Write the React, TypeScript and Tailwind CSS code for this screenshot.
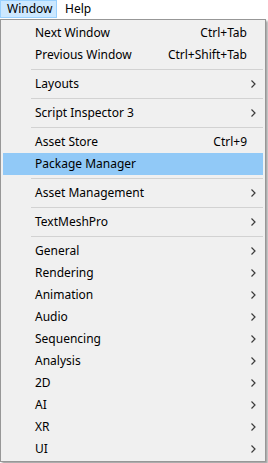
type Item =
  | { kind: "sep" }
  | { kind: "item"; label: string; shortcut?: string; sub?: boolean; active?: boolean };

const items: Item[] = [
  { kind: "item", label: "Next Window", shortcut: "Ctrl+Tab" },
  { kind: "item", label: "Previous Window", shortcut: "Ctrl+Shift+Tab" },
  { kind: "sep" },
  { kind: "item", label: "Layouts", sub: true },
  { kind: "sep" },
  { kind: "item", label: "Script Inspector 3", sub: true },
  { kind: "sep" },
  { kind: "item", label: "Asset Store", shortcut: "Ctrl+9" },
  { kind: "item", label: "Package Manager", active: true },
  { kind: "sep" },
  { kind: "item", label: "Asset Management", sub: true },
  { kind: "sep" },
  { kind: "item", label: "TextMeshPro", sub: true },
  { kind: "sep" },
  { kind: "item", label: "General", sub: true },
  { kind: "item", label: "Rendering", sub: true },
  { kind: "item", label: "Animation", sub: true },
  { kind: "item", label: "Audio", sub: true },
  { kind: "item", label: "Sequencing", sub: true },
  { kind: "item", label: "Analysis", sub: true },
  { kind: "item", label: "2D", sub: true },
  { kind: "item", label: "AI", sub: true },
  { kind: "item", label: "XR", sub: true },
  { kind: "item", label: "UI", sub: true },
];

function Chevron() {
  return (
    <svg width="5" height="8" viewBox="0 0 5 8" className="block">
      <path d="M0.5 0.5 L4 4 L0.5 7.5" fill="none" stroke="#3c3c3c" strokeWidth="1.2" />
    </svg>
  );
}

export default function App() {
  return (
    <div className="w-[268px] h-[463px] bg-white text-[12px] text-black font-['Noto_Sans',sans-serif] leading-none overflow-hidden">
      <div className="flex h-[19px] items-stretch">
        <div className="w-[57px] h-[18px] bg-[#cce8ff] border border-[#99d1ff] flex items-center pl-[6px]">
          Window
        </div>
        <div className="flex items-center pl-[8px] h-[18px]">Help</div>
      </div>
      <div className="w-[266px] h-[443px] bg-[#f0f0f0] border border-[#979797] shadow-[2px_2px_2px_rgba(0,0,0,0.35)] pt-[2px] px-[2px]">
        {items.map((it, i) =>
          it.kind === "sep" ? (
            <div key={i} className="h-[7px] flex items-center pl-[28px]">
              <div className="h-px w-full bg-[#d2d2d2]" />
            </div>
          ) : (
            <div
              key={i}
              className={
                "h-[22px] flex items-center pl-[32px] " + (it.active ? "bg-[#91c9f7]" : "")
              }
            >
              <span className="flex-1">{it.label}</span>
              {it.shortcut && <span>{it.shortcut}</span>}
              <span className="w-[16px] flex items-center pl-[4px]">{it.sub && <Chevron />}</span>
            </div>
          )
        )}
      </div>
    </div>
  );
}
